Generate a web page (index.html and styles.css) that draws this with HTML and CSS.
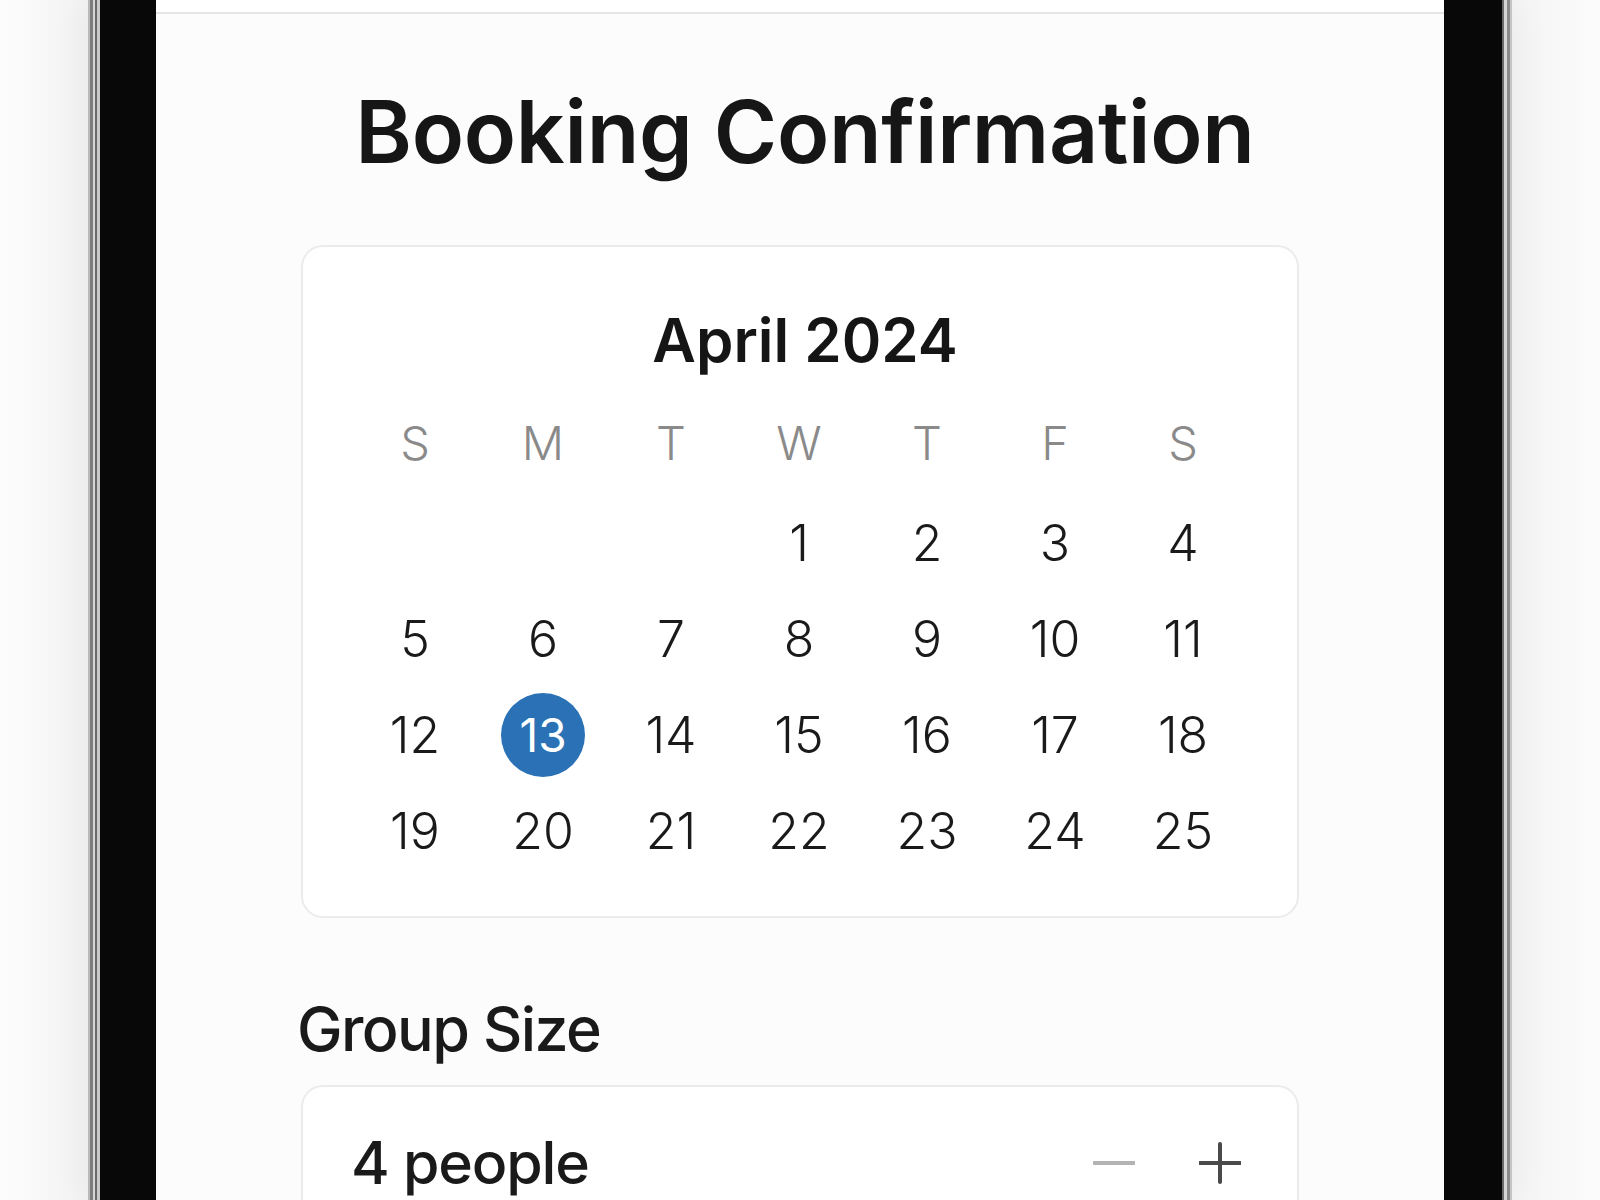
FILE: index.html
```html
<!DOCTYPE html>
<html lang="en">
<head>
<meta charset="UTF-8" />
<meta name="viewport" content="width=device-width, initial-scale=1" />
<title>Booking Confirmation</title>
<link rel="stylesheet" href="styles.css">
</head>
<body>

<div class="phone">
  <div class="bezel">
    <div class="screen">
      <div class="topbar"></div>

      <h1 class="title">Booking Confirmation</h1>

      <!-- Calendar card -->
      <div class="card calendar">
        <div class="month">April 2024</div>
        <div class="weekdays">
          <span>S</span><span>M</span><span>T</span><span>W</span><span>T</span><span>F</span><span>S</span>
        </div>
        <div class="days">
          <span></span><span></span><span></span>
          <span>1</span><span>2</span><span>3</span><span>4</span>
          <span>5</span><span>6</span><span>7</span><span>8</span><span>9</span><span>10</span><span>11</span>
          <span>12</span><span class="selected">13</span><span>14</span><span>15</span><span>16</span><span>17</span><span>18</span>
          <span>19</span><span>20</span><span>21</span><span>22</span><span>23</span><span>24</span><span>25</span>
        </div>
      </div>

      <!-- Group size -->
      <div class="label">Group Size</div>
      <div class="card stepper">
        <div class="count">4 people</div>
        <div class="controls">
          <button class="step minus" aria-label="Decrease">
            <svg width="42" height="42" viewBox="0 0 42 42"><line x1="1" y1="21" x2="41" y2="21" stroke="#b3b3b3" stroke-width="4" stroke-linecap="round"/></svg>
          </button>
          <button class="step plus" aria-label="Increase">
            <svg width="42" height="42" viewBox="0 0 42 42"><line x1="1" y1="21" x2="41" y2="21" stroke="#4a4a4a" stroke-width="4" stroke-linecap="round"/><line x1="21" y1="2" x2="21" y2="40" stroke="#4a4a4a" stroke-width="4" stroke-linecap="round"/></svg>
          </button>
        </div>
      </div>
    </div>
  </div>
</div>

</body>
</html>
```

FILE: styles.css
```css
/* --- Reset & basics --- */
* {
  margin: 0; padding: 0; box-sizing: border-box;
}
html, body {
  height: 100%;
  overflow: hidden;
}
body {
  font-family: Inter, "Noto Sans", sans-serif;
  background: linear-gradient(to right, #fdfdfd 0%, #f3f3f3 5%, #f5f5f5 95%, #fbfbfb 100%);
  color: #1a1a1a;
}

/* --- Phone frame --- */
.phone {
  margin-left: 88px;
  width: 1424px;
  height: 1200px;
  padding: 0 10px 0 12px;
  background: linear-gradient(to right,
    #b9b9b9 0, #b9b9b9 2px, #7c7c7c 2px, #7c7c7c 5px, #d6d6d6 5px, #d6d6d6 7px,
    #6a6a6a 7px, #6a6a6a 9px, #c8c8c8 9px, #c8c8c8 12px,
    #c8c8c8 calc(100% - 10px), #6a6a6a calc(100% - 10px), #6a6a6a calc(100% - 8px),
    #d6d6d6 calc(100% - 8px), #d6d6d6 calc(100% - 5px), #8a8a8a calc(100% - 5px), #8a8a8a calc(100% - 2px),
    #c4c4c4 calc(100% - 2px));
  box-shadow: 0 0 40px rgba(0,0,0,0.06);
}
.bezel {
  height: 100%;
  background: #080808;
  padding: 0 58px 0 56px;
}
.screen {
  height: 100%;
  background: #fcfcfc;
  padding: 0 145px;
  overflow: hidden;
}
.topbar {
  height: 14px;
  margin: 0 -145px;
  background: #fff;
  border-bottom: 2px solid #e4e4e4;
}

/* --- Title --- */
.title {
  margin-top: 72px;
  padding-left: 10px;
  font-size: 86px;
  line-height: 92px;
  font-weight: 600;
  text-align: center;
  letter-spacing: -0.3px;
  color: #161616;
}

/* --- Cards --- */
.card {
  background: #fff;
  border: 2px solid #ebebeb;
  border-radius: 22px;
}

/* --- Calendar --- */
.calendar {
  margin-top: 67px;
  padding: 57px 48px 37px;
}
.month {
  padding-left: 10px;
  font-size: 60px;
  line-height: 72px;
  font-weight: 600;
  text-align: center;
  color: #151515;
}
.weekdays,
.days {
  display: grid;
  grid-template-columns: repeat(7, 128px);
}
.weekdays {
  margin-top: 19px;
  margin-bottom: 4px;
}
.weekdays span {
  height: 96px;
  line-height: 96px;
  text-align: center;
  font-size: 47px;
  font-weight: 300;
  color: #8a8a8a;
}
.days span {
  height: 96px;
  display: flex;
  align-items: center;
  justify-content: center;
  font-size: 50px;
  font-weight: 300;
  color: #1a1a1a;
}
.days .selected {
  width: 84px;
  height: 84px;
  margin: 6px auto;
  border-radius: 50%;
  background: #2a72b5;
  color: #fff;
  font-size: 46px;
  font-weight: 400;
}

/* --- Group size --- */
.label {
  margin-top: 71px;
  margin-left: -4px;
  font-size: 61px;
  line-height: 80px;
  font-weight: 500;
  letter-spacing: -1.6px;
  color: #1a1a1a;
}
.stepper {
  margin-top: 16px;
  height: 200px;
  padding: 36px 56px 40px 48px;
  display: flex;
  align-items: flex-start;
  justify-content: space-between;
}
.count {
  font-size: 59px;
  line-height: 80px;
  font-weight: 500;
  letter-spacing: -1.2px;
  color: #1a1a1a;
}
.controls {
  display: flex;
  gap: 64px;
  height: 80px;
  align-items: center;
}
.step {
  border: none;
  background: none;
  width: 42px;
  height: 42px;
  display: flex;
  cursor: pointer;
}
```
